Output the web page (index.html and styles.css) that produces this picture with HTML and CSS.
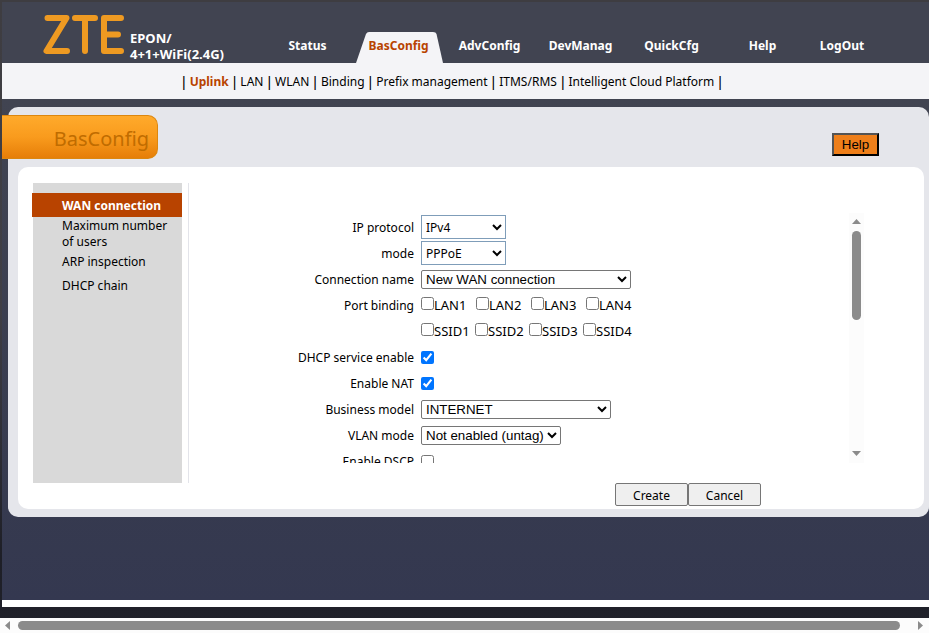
FILE: index.html
```html
<!DOCTYPE html>
<html lang="en">
<head>
<meta charset="utf-8">
<title>BasConfig - WAN connection</title>
<link rel="stylesheet" href="styles.css">
</head>
<body>
<div class="page">
  <header class="header">
    <div class="brand">
      <svg class="logo" viewBox="0 0 82 39" role="img" aria-label="ZTE">
        <g fill="none" stroke="#ee9a22" stroke-width="6" stroke-linecap="round" stroke-linejoin="round">
          <path d="M4.500 3H23.500L3.500 36H24"/>
          <path d="M32 3H52M42 3V36"/>
          <path d="M78 3H61V36H78M61 19.500H75"/>
        </g>
      </svg>
      <div class="model"><div>EPON/</div><div>4+1+WiFi(2.4G)</div></div>
    </div>
    <nav class="mainnav">
      <a href="#">Status</a>
      <a href="#" class="current">
        <svg class="tab" viewBox="0 0 88 31" preserveAspectRatio="none" aria-hidden="true"><path d="M0 31L10 2Q11 0 13 0H77Q80 0 80.500 2L87 31Z" fill="#f4f4f7"/></svg>
        <span>BasConfig</span>
      </a>
      <a href="#">AdvConfig</a>
      <a href="#">DevManag</a>
      <a href="#">QuickCfg</a>
      <a href="#">Help</a>
      <a href="#" class="logout">LogOut</a>
    </nav>
  </header>
  <nav class="subnav">
    <span>|</span><a href="#" class="current">Uplink</a>
    <span>|</span><a href="#">LAN</a>
    <span>|</span><a href="#">WLAN</a>
    <span>|</span><a href="#">Binding</a>
    <span>|</span><a href="#">Prefix management</a>
    <span>|</span><a href="#">ITMS/RMS</a>
    <span>|</span><a href="#">Intelligent Cloud Platform</a>
    <span>|</span>
  </nav>
  <main class="stage">
    <section class="panel">
      <div class="panel-head">
        <h1 class="title">BasConfig</h1>
        <button type="button" class="help">Help</button>
      </div>
      <div class="card">
        <nav class="side">
          <a href="#" class="current">WAN connection</a>
          <a href="#" class="two-line">Maximum number of users</a>
          <a href="#">ARP inspection</a>
          <a href="#">DHCP chain</a>
        </nav>
        <form class="content">
          <div class="scroller">
            <div class="fields">
              <div class="row"><label for="ip">IP protocol</label><select id="ip" class="short"><option>IPv4</option></select></div>
              <div class="row"><label for="mode">mode</label><select id="mode" class="short"><option>PPPoE</option></select></div>
              <div class="row"><label for="conn">Connection name</label><select id="conn" class="wide"><option>New WAN connection</option></select></div>
              <div class="row"><span>Port binding</span>
                <div class="checks lan">
                  <label><input type="checkbox">LAN1</label>
                  <label><input type="checkbox">LAN2</label>
                  <label><input type="checkbox">LAN3</label>
                  <label><input type="checkbox">LAN4</label>
                </div>
              </div>
              <div class="row"><span></span>
                <div class="checks ssid">
                  <label><input type="checkbox">SSID1</label>
                  <label><input type="checkbox">SSID2</label>
                  <label><input type="checkbox">SSID3</label>
                  <label><input type="checkbox">SSID4</label>
                </div>
              </div>
              <div class="row"><label for="dhcp">DHCP service enable</label><input id="dhcp" type="checkbox" checked></div>
              <div class="row"><label for="nat">Enable NAT</label><input id="nat" type="checkbox" checked></div>
              <div class="row"><label for="biz">Business model</label><select id="biz" class="medium"><option>INTERNET</option></select></div>
              <div class="row"><label for="vlan">VLAN mode</label><select id="vlan" class="fit"><option>Not enabled (untag)</option></select></div>
              <div class="row"><label for="dscp">Enable DSCP</label><input id="dscp" type="checkbox"></div>
            </div>
            <div class="vbar" aria-hidden="true">
              <svg viewBox="0 0 9 5"><path d="M4.500 0L9 5H0Z"/></svg>
              <div class="vtrack"><div class="vthumb"></div></div>
              <svg viewBox="0 0 9 5"><path d="M0 0H9L4.500 5Z"/></svg>
            </div>
          </div>
          <div class="actions"><button type="button">Create</button><button type="button">Cancel</button></div>
        </form>
      </div>
    </section>
  </main>
  <div class="strip"></div>
</div>
<div class="hbar" aria-hidden="true">
  <svg viewBox="0 0 5 9"><path d="M5 0V9L0 4.500Z"/></svg>
  <div class="hthumb"></div>
  <svg viewBox="0 0 5 9"><path d="M0 0V9L5 4.500Z"/></svg>
</div>
</body>
</html>
```
FILE: styles.css
```css
* { box-sizing: border-box; }

body {
  margin: 0;
  min-height: 100vh;
  display: flex;
  flex-direction: column;
  font: 12px/16px "Noto Sans", sans-serif;
  color: #000;
}

a { color: inherit; text-decoration: none; }

.page {
  flex: 1;
  display: flex;
  flex-direction: column;
  padding: 2px 0 11px 2px;
  background: linear-gradient(#3e3d41, #403f45 50%, #1e1f27 90%, #20212a);
}

.header {
  display: flex;
  height: 61px;
  background: #414451;
  color: #fff;
  font-weight: bold;
}

.brand {
  display: flex;
  width: 260px;
  padding: 13px 0 0 41px;
  gap: 5px;
}

.logo { width: 82px; height: 39px; }
.model { padding-top: 15px; font-size: 13px; }

.mainnav { display: flex; align-items: flex-end; }

.mainnav a {
  position: relative;
  width: 91px;
  height: 31px;
  padding-top: 6px;
  text-align: center;
}

.mainnav .logout { width: 68px; }
.mainnav .current { color: #b84300; }
.mainnav .current span { position: relative; }
.tab { position: absolute; top: 0; left: 3px; width: 88px; height: 31px; }

.subnav {
  display: flex;
  gap: 4px;
  height: 36px;
  padding: 11px 0 0 180px;
  background: #f4f4f7;
  white-space: nowrap;
}

.subnav span { font-family: "Liberation Sans", sans-serif; font-size: 14px; }
.subnav .current { color: #b84300; font-weight: bold; }

.stage {
  flex: 1;
  padding: 8px 0 0 6px;
  background: linear-gradient(#414451, #363a4f 80%, #343850);
}

.panel {
  padding: 8px 5px 8px 10px;
  border-radius: 10px;
  background: #e5e6eb;
}

.panel-head {
  display: flex;
  justify-content: space-between;
  height: 52px;
}

.title {
  width: 156px;
  height: 44px;
  margin: 0 0 0 -16px;
  padding-right: 8px;
  border: 1px solid #dc870f;
  border-left: 0;
  border-radius: 0 10px 10px 0;
  background: linear-gradient(#ffaa2b, #f99b1d 50%, #e67e08);
  color: #c06c00;
  font: 20px/46px "Noto Sans", sans-serif;
  text-align: right;
}

.help {
  width: 47px;
  height: 23px;
  margin: 18px 45px 0 0;
  padding: 0;
  border: 2px outset #000;
  background: #ee7f1a;
  font-family: "Liberation Sans", sans-serif;
}

.card {
  display: flex;
  padding: 16px 60px 3px 14px;
  border-radius: 10px;
  background: #fff;
}

.side {
  width: 150px;
  height: 300px;
  padding-top: 10px;
  background: linear-gradient(90deg, #fff 1px, #d9d9d9 1px);
}

.side a { display: block; padding: 5px 0 3px 30px; }
.side .two-line { padding: 1px 10px 0 30px; }
.side .two-line + a { padding-top: 4px; }
.side .current { background: #b84300; color: #fff; font-weight: bold; }

.content {
  flex: 1;
  margin-left: 6px;
  background: linear-gradient(#e3e4ea, #e3e4ea) 0 0 / 1px 300px no-repeat;
}

.scroller { display: flex; height: 250px; margin-top: 30px; overflow: hidden; }
.fields { flex: 1; padding-top: 1px; }

.row {
  display: grid;
  grid-template-columns: 226px 1fr;
  gap: 7px;
  align-items: center;
  height: 26px;
}

.row > :first-child { padding-top: 2px; text-align: right; }
.row > :nth-child(2) { justify-self: start; }

input[type="checkbox"] { width: 13px; height: 13px; margin: 0; }

select {
  height: 19px;
  border: 1px solid #767676;
  border-radius: 2px;
  background-color: #fff;
  color: #000;
  font-family: "Liberation Sans", sans-serif;
}

.short {
  width: 85px;
  height: 24px;
  border-color: #7f9db9;
  border-radius: 0;
  font: 12px "Noto Sans", sans-serif;
}

.wide { width: 210px; }
.medium { width: 190px; }
.fit { width: 140px; }

.checks { display: flex; }
.checks label { display: flex; align-items: flex-start; font-size: 13px; }
.lan label { width: 55px; }
.ssid label { width: 54px; }

.vbar {
  display: flex;
  flex-direction: column;
  align-items: center;
  width: 15px;
  padding: 6px 0 7px;
  background: #fcfcfc;
}

svg { flex: none; }
.vbar svg { width: 9px; height: 5px; fill: #8b8b8b; }
.vtrack { flex: 1; padding-top: 7px; }
.vthumb { width: 9px; height: 89px; border-radius: 5px; background: #8b8b8b; }

.actions {
  display: flex;
  justify-content: flex-end;
  padding: 20px 103px 0 0;
}

.actions button {
  width: 73px;
  height: 23px;
  padding: 2px 0 0;
  border: 1px solid #767676;
  border-radius: 2px;
  background: #efefef;
  font: 12px/16px "Noto Sans", sans-serif;
}

.strip { height: 7px; background: #fff; }

.hbar {
  display: flex;
  align-items: center;
  gap: 8px;
  height: 15px;
  padding: 0 6px 0 5px;
  background: #fcfcfc;
}

.hbar svg { width: 5px; height: 9px; fill: #8b8b8b; }
.hthumb { flex: 1; height: 9px; margin-right: 10px; border-radius: 5px; background: #8b8b8b; }
```
